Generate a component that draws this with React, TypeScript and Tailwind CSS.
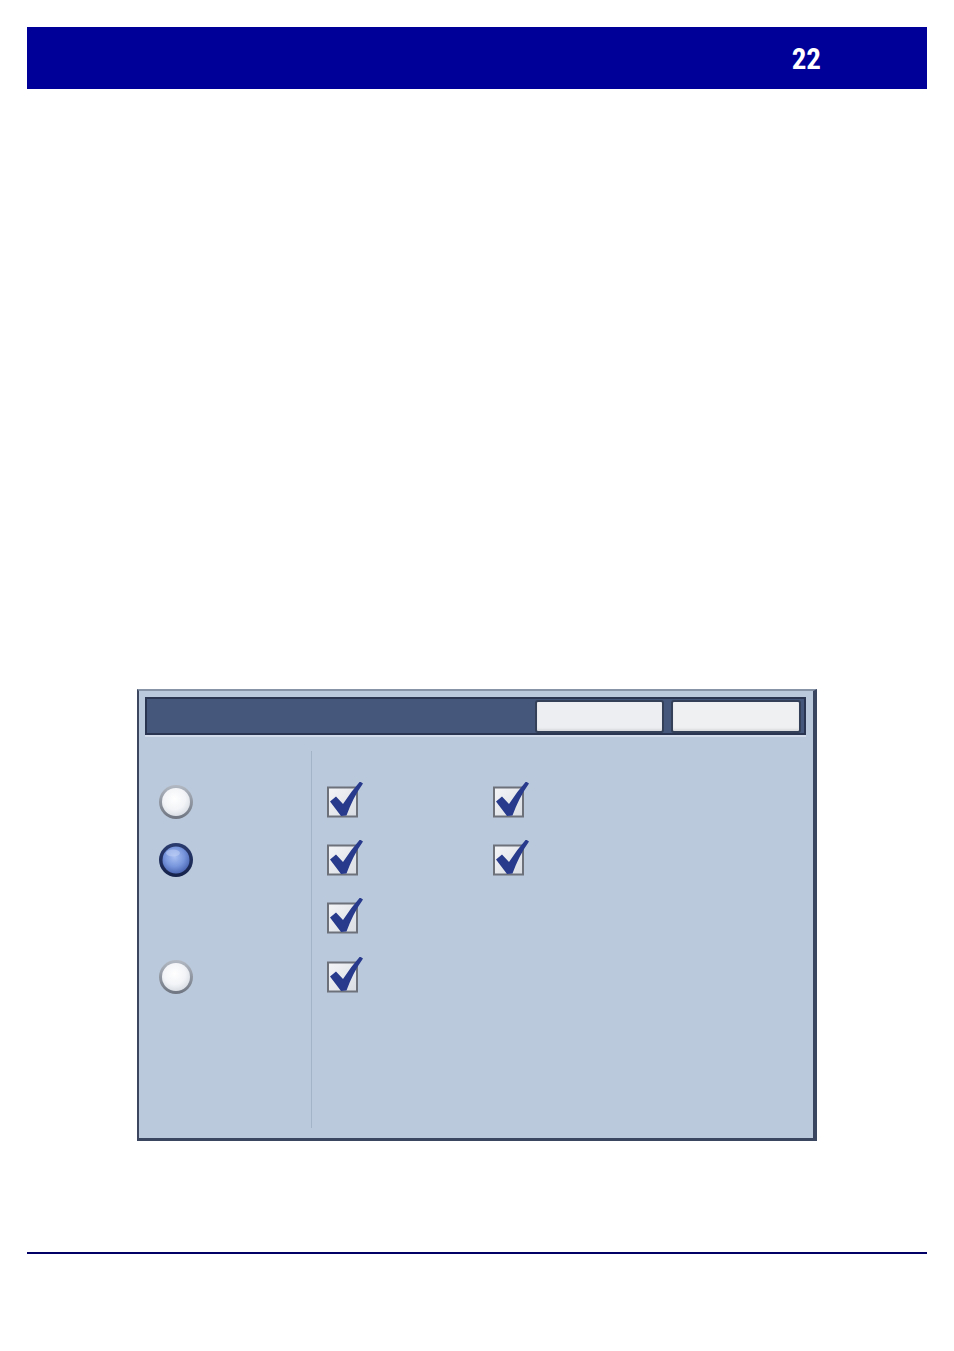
import React from "react";

function Radio({ selected }: { selected?: boolean }) {
  const id = selected ? "rsel" : "run";
  return (
    <svg width="36" height="36" viewBox="0 0 36 36">
      <defs>
        <radialGradient id={id + "f"} cx="45%" cy="38%" r="60%">
          {selected ? (
            <>
              <stop offset="0%" stopColor="#a9c0f2" />
              <stop offset="60%" stopColor="#7896dc" />
              <stop offset="100%" stopColor="#4f6bb8" />
            </>
          ) : (
            <>
              <stop offset="0%" stopColor="#ffffff" />
              <stop offset="65%" stopColor="#f2f4f7" />
              <stop offset="100%" stopColor="#dde1e7" />
            </>
          )}
        </radialGradient>
        <linearGradient id={id + "r"} x1="0" y1="0" x2="0" y2="1">
          {selected ? (
            <>
              <stop offset="0%" stopColor="#2a3b6e" />
              <stop offset="100%" stopColor="#15224a" />
            </>
          ) : (
            <>
              <stop offset="0%" stopColor="#b3b9c3" />
              <stop offset="100%" stopColor="#6e7580" />
            </>
          )}
        </linearGradient>
      </defs>
      <circle cx="18" cy="18" r="17" fill={`url(#${id}r)`} />
      <circle cx="18" cy="18" r={selected ? 13.5 : 14} fill={`url(#${id}f)`} />
      {selected && <ellipse cx="15" cy="11" rx="7" ry="3.5" fill="#c8d6f8" opacity="0.5" />}
    </svg>
  );
}

function Check() {
  return (
    <svg width="45" height="40" viewBox="0 0 45 40" className="block">
      <defs>
        <linearGradient id="cbg" x1="0" y1="0" x2="1" y2="1">
          <stop offset="0%" stopColor="#f4f5f7" />
          <stop offset="100%" stopColor="#d9dde3" />
        </linearGradient>
      </defs>
      <rect x="7" y="5.5" width="29" height="29" fill="url(#cbg)" stroke="#6c717a" strokeWidth="2" />
      <path
        d="M9 19.5 L15 14.5 L22 22 Q30 9.5 39 -0.5 L42 1.5 Q32 15.5 25.5 33.5 L20 34 Z"
        fill="#283a8c"
      />
    </svg>
  );
}

function Row({ children }: { children?: React.ReactNode }) {
  return <div className="h-[58px] flex items-center">{children}</div>;
}

export default function App() {
  return (
    <div className="w-[954px] h-[1351px] bg-white pt-[27px] overflow-hidden">
      <div className="mx-[27px] h-[62px] bg-[#000099] flex items-center justify-end pr-[106px] pt-[3px]">
        <span
          className="text-white font-bold text-[29px] leading-none"
          style={{ fontFamily: '"Liberation Sans Narrow", "Arial Narrow", "Roboto Condensed", sans-serif' }}
        >
          22
        </span>
      </div>

      <div className="mt-[600px] ml-[137px] w-[680px] h-[452px] bg-[#bac9db] border-l-2 border-t-2 border-r-[4px] border-b-[3px] border-l-[#3c465f] border-t-[#8794a8] border-r-[#3a4560] border-b-[#3a4560] flex flex-col">
        <div className="mt-[6px] ml-[6px] w-[661px] h-[38px] bg-[#45587b] border-2 border-[#2a3552] flex items-center justify-end pr-[3px] gap-[7px] shadow-[0_2px_0_#d2dcea]">
          <div className="w-[129px] h-[33px] rounded-[3px] bg-[#eceef1] border-2 border-[#344058] shadow-[inset_0_-2px_2px_rgba(0,0,0,0.08)]" />
          <div className="w-[130px] h-[33px] rounded-[3px] bg-[#eef0f2] border-2 border-[#344058] shadow-[inset_0_-2px_2px_rgba(0,0,0,0.08)]" />
        </div>

        <div className="flex mt-[16px] h-[377px]">
          <div className="w-[172px] pt-[22px] pl-[19px] flex flex-col">
            <Row><Radio /></Row>
            <Row><Radio selected /></Row>
            <Row />
            <div className="h-[59px] flex items-center"><Radio /></div>
          </div>
          <div className="w-px bg-[#a4b4c8]" />
          <div className="pt-[22px] pl-[9px] flex gap-[121px]">
            <div className="flex flex-col">
              <Row><Check /></Row>
              <Row><Check /></Row>
              <Row><Check /></Row>
              <div className="h-[59px] flex items-center"><Check /></div>
            </div>
            <div className="flex flex-col">
              <Row><Check /></Row>
              <Row><Check /></Row>
            </div>
          </div>
        </div>
      </div>

      <div className="mt-[111px] mx-[27px] h-[2px] bg-[#000066]" />
    </div>
  );
}
